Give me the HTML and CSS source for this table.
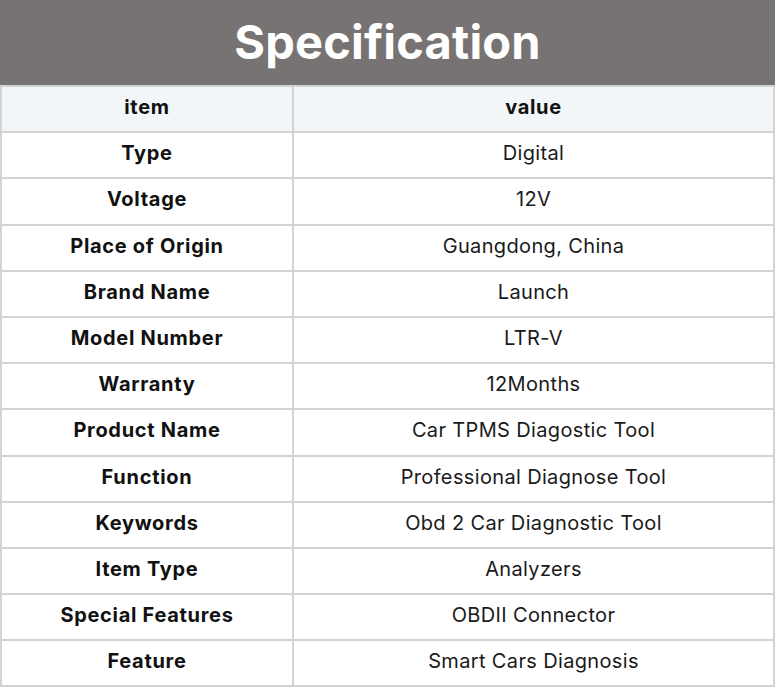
FILE: index.html
```html
<!DOCTYPE html>
<html>
<head>
<meta charset="utf-8">
<link rel="stylesheet" href="styles.css">
</head>
<body>
<div class="banner"><h1 class="title">Specification</h1></div>
<table class="spec">
<colgroup><col class="col-item"><col class="col-value"></colgroup>
<thead>
<tr><th>item</th><th>value</th></tr>
</thead>
<tbody>
<tr><th>Type</th><td>Digital</td></tr>
<tr><th>Voltage</th><td>12V</td></tr>
<tr><th>Place of Origin</th><td>Guangdong, China</td></tr>
<tr><th>Brand Name</th><td>Launch</td></tr>
<tr><th>Model Number</th><td>LTR-V</td></tr>
<tr><th>Warranty</th><td>12Months</td></tr>
<tr><th>Product Name</th><td>Car TPMS Diagostic Tool</td></tr>
<tr><th>Function</th><td>Professional Diagnose Tool</td></tr>
<tr><th>Keywords</th><td>Obd 2 Car Diagnostic Tool</td></tr>
<tr><th>Item Type</th><td>Analyzers</td></tr>
<tr><th>Special Features</th><td>OBDII Connector</td></tr>
<tr><th>Feature</th><td>Smart Cars Diagnosis</td></tr>
</tbody>
</table>
</body>
</html>
```

FILE: styles.css
```css
html, body {
  margin: 0;
  padding: 0;
  background: #ffffff;
  font-family: Inter, "Noto Sans", sans-serif;
  color: #111111;
}
.banner {
  height: 85px;
  background: #777372;
  display: flex;
  align-items: center;
  justify-content: center;
}
.title {
  margin: 0;
  color: #ffffff;
  font-size: 47px;
  font-weight: 700;
  letter-spacing: 0.2px;
  line-height: 1;
  padding-bottom: 2px;
}
.spec {
  width: 775px;
  border-collapse: collapse;
  table-layout: fixed;
}
.col-item {
  width: 292px;
}
.spec th, .spec td {
  border: 2px solid #d3d3d3;
  height: 46.2px;
  padding: 0 0 4px 0;
  box-sizing: border-box;
  text-align: center;
  font-size: 20px;
  line-height: 22px;
}
.spec th {
  font-weight: 700;
  letter-spacing: 0.7px;
}
.spec td {
  font-weight: 400;
  letter-spacing: 0.35px;
  color: #1a1a1a;
}
.spec thead th {
  background: #f2f6f8;
}
```
